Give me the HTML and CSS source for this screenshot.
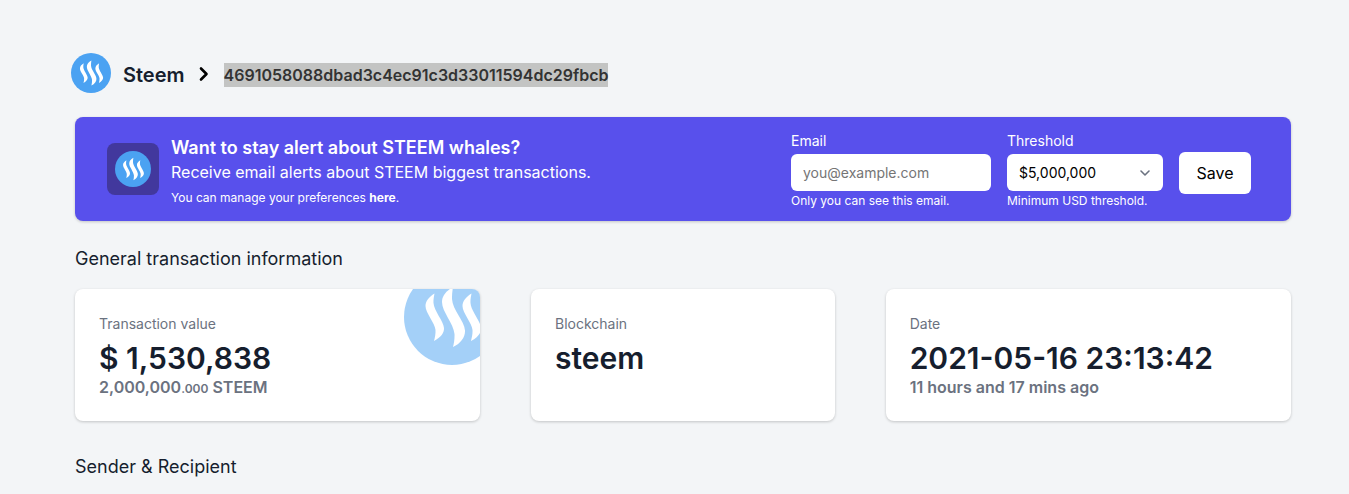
FILE: index.html
```
<!DOCTYPE html>
<html lang="en">
<head>
  <meta charset="UTF-8" />
  <meta name="viewport" content="width=device-width, initial-scale=1.0"/>
  <title>Steem transaction</title>
  <link rel="stylesheet" href="styles.css">
</head>
<body>
  <!-- Steem waves, shared by every logo -->
  <svg class="sprite" aria-hidden="true">
    <symbol id="steem" viewBox="0 0 96 96">
      <circle cx="48" cy="48" r="48" fill="#4ba2f2"/>
      <g fill="#fff">
        <path d="M30.5 24.5C25 28 21.5 32 21.5 37C21.5 44 31 54 31.5 61C31.7 65 31 68 30 72C37 68 40.3 64 40 59C39.5 52 30 42 29.5 34C29.3 31 29.8 28 30.5 24.5Z"/>
        <path d="M49 18C42 22 38 27 38 33C38 43 49.5 54 50.5 65C50.7 70 50 74 49 78C57 74 61.3 68 61 61.5C60.5 52 48.5 41 48 30C47.9 26 48.3 22 49 18Z"/>
        <path d="M67.5 24.5C62 28 58.5 32 58.5 37C58.5 44 68 54 68.5 61C68.7 65 68 68 67 72C74 68 77.3 64 77 59C76.5 52 67 42 66.5 34C66.3 31 66.8 28 67.5 24.5Z"/>
      </g>
    </symbol>
  </svg>

  <main class="page">
    <header class="crumbs">
      <svg class="crumbs-logo" role="img" aria-label="Steem"><use href="#steem"/></svg>
      <h1 class="crumbs-name">Steem</h1>
      <svg class="crumbs-arrow" viewBox="0 0 10 16" aria-hidden="true"><path d="M2 2.5L7.5 8L2 13.5" fill="none" stroke="#000" stroke-width="2.6" stroke-linecap="round" stroke-linejoin="round"/></svg>
      <span class="crumbs-hash">4691058088dbad3c4ec91c3d33011594dc29fbcb</span>
    </header>

    <section class="banner">
      <div class="banner-icon">
        <svg class="banner-logo" aria-hidden="true"><use href="#steem"/></svg>
      </div>
      <div class="banner-text">
        <h2 class="banner-title">Want to stay alert about STEEM whales?</h2>
        <p class="banner-lead">Receive email alerts about STEEM biggest transactions.</p>
        <p class="banner-note">You can manage your preferences <a href="#">here</a>.</p>
      </div>
      <form class="alert-form">
        <div class="field">
          <label for="email">Email</label>
          <input class="field-email" type="email" id="email" placeholder="you@example.com">
          <p class="field-help">Only you can see this email.</p>
        </div>
        <div class="field">
          <label for="threshold">Threshold</label>
          <select class="field-threshold" id="threshold">
            <option>$5,000,000</option>
          </select>
          <p class="field-help">Minimum USD threshold.</p>
        </div>
        <button class="btn-save" type="button">Save</button>
      </form>
    </section>

    <h2 class="section-title">General transaction information</h2>
    <section class="cards">
      <article class="card card-wide">
        <h3 class="card-label">Transaction value</h3>
        <p class="card-value">$ 1,530,838</p>
        <p class="card-sub">2,000,000<small>.000</small> STEEM</p>
        <svg class="card-logo" aria-hidden="true"><use href="#steem"/></svg>
      </article>
      <article class="card card-narrow">
        <h3 class="card-label">Blockchain</h3>
        <p class="card-value">steem</p>
      </article>
      <article class="card card-wide">
        <h3 class="card-label">Date</h3>
        <p class="card-value">2021-05-16 23:13:42</p>
        <p class="card-sub">11 hours and 17 mins ago</p>
      </article>
    </section>

    <h2 class="section-title">Sender &amp; Recipient</h2>
  </main>
</body>
</html>
```
FILE: styles.css
```
:root {
  --bg-color: #f3f5f7;
  --text-color: #161e2e;
  --muted: #6b7280;
  --accent: #5850ec;
  --accent-dark: #42389d;
}
* { box-sizing: border-box; }
body {
  margin: 0;
  font-family: Inter, sans-serif;
  background: var(--bg-color);
  color: var(--text-color);
}
h1, h2, h3, p { margin: 0; }
.sprite { position: absolute; width: 0; height: 0; }
.page { padding: 53px 58px 0 75px; }

/* Breadcrumb */
.crumbs {
  display: flex;
  align-items: center;
  margin-left: -4px;
  margin-bottom: 24px;
}
.crumbs-logo { width: 40px; height: 40px; margin-right: 12px; }
.crumbs-name { font-size: 20px; line-height: 28px; font-weight: 600; padding-top: 4px; }
.crumbs-arrow { width: 10px; height: 16px; margin: 2px 15px 0 14px; }
.crumbs-hash {
  margin-top: 4px;
  font-size: 16px;
  line-height: 24px;
  font-weight: 600;
  color: #333;
  background: #c3c4c3;
}

/* Alert banner */
.banner {
  display: flex;
  align-items: center;
  padding: 14px 40px 10px 32px;
  background: var(--accent);
  color: #fff;
  border-radius: 8px;
  box-shadow: 0 1px 3px rgba(0,0,0,0.2);
}
.banner-icon {
  display: flex;
  padding: 8px;
  margin: 0 12px 4px 0;
  background: var(--accent-dark);
  border-radius: 8px;
}
.banner-logo { width: 36px; height: 36px; }
.banner-text { flex: 1; padding-top: 2px; }
.banner-title { font-size: 18px; line-height: 25px; font-weight: 600; }
.banner-lead { font-size: 16px; line-height: 25px; }
.banner-note { font-size: 12px; line-height: 25px; }
.banner-note a { color: #fff; font-weight: 700; text-decoration: none; }

.alert-form { display: flex; align-items: center; gap: 16px; }
.field { display: flex; flex-direction: column; }
.field label { font-size: 14px; line-height: 20px; margin-bottom: 3px; }
.field input,
.field select {
  height: 37px;
  padding: 0 12px;
  border: none;
  border-radius: 6px;
  background: #fff;
  color: #000;
  font-family: inherit;
  font-size: 14px;
}
.field input::placeholder { color: #757575; }
.field-email { width: 200px; }
.field .field-threshold {
  width: 156px;
  appearance: none;
  background: #fff url("data:image/svg+xml,%3Csvg xmlns='http://www.w3.org/2000/svg' viewBox='0 0 12 8'%3E%3Cpath d='M2 2l4 4 4-4' fill='none' stroke='%236b7280' stroke-width='1.6' stroke-linecap='round' stroke-linejoin='round'/%3E%3C/svg%3E") no-repeat right 12px center / 12px 8px;
}
.field-help { font-size: 12px; line-height: 20px; }
.btn-save {
  height: 42px;
  width: 72px;
  margin-top: 4px;
  border: none;
  border-radius: 6px;
  background: #fff;
  color: #000;
  font-family: inherit;
  font-size: 16px;
  cursor: pointer;
}

/* Info cards */
.section-title {
  margin: 24px 0 17px;
  font-size: 18px;
  line-height: 27px;
  font-weight: 400;
}
.cards {
  display: flex;
  justify-content: space-between;
  margin-bottom: 32px;
}
.card {
  position: relative;
  overflow: hidden;
  padding: 24px;
  background: #fff;
  border-radius: 8px;
  box-shadow: 0 1px 3px rgba(0,0,0,0.2);
}
.card-wide { width: 33.333%; }
.card-narrow { width: 25%; }
.card-label { font-size: 14px; line-height: 22px; font-weight: 400; color: var(--muted); }
.card-value { font-size: 30px; line-height: 38px; margin-top: 4px; font-weight: 600; }
.card-sub { font-size: 16px; line-height: 20px; font-weight: 600; color: var(--muted); }
.card-sub small { font-size: 12px; line-height: 1; }
.card-logo {
  position: absolute;
  top: -20px;
  right: -20px;
  width: 96px;
  height: 96px;
  opacity: 0.5;
}
```
